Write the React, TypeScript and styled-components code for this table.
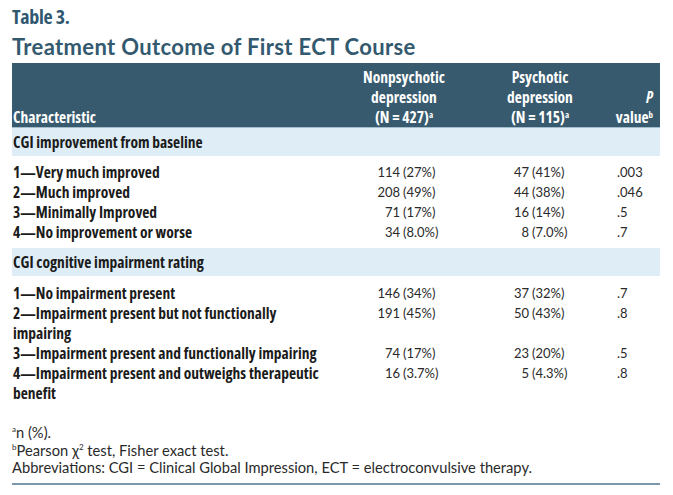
import React from "react";
import styled, { createGlobalStyle } from "styled-components";

const GlobalStyle = createGlobalStyle`
  html, body {
    margin: 0;
    padding: 0;
    background: #ffffff;
  }
`;

const CONDENSED = `"Open Sans", "DejaVu Sans Condensed", sans-serif`;
const BODY = `Lato, "Open Sans", "Liberation Sans", sans-serif`;

type Row = {
  label: string;
  non: [string, string];
  psy: [string, string];
  p: string;
};

type Section = {
  title: string;
  rows: Row[];
};

const SECTIONS: Section[] = [
  {
    title: "CGI improvement from baseline",
    rows: [
      { label: "1—Very much improved", non: ["114", "(27%)"], psy: ["47", "(41%)"], p: ".003" },
      { label: "2—Much improved", non: ["208", "(49%)"], psy: ["44", "(38%)"], p: ".046" },
      { label: "3—Minimally Improved", non: ["71", "(17%)"], psy: ["16", "(14%)"], p: ".5" },
      { label: "4—No improvement or worse", non: ["34", "(8.0%)"], psy: ["8", "(7.0%)"], p: ".7" },
    ],
  },
  {
    title: "CGI cognitive impairment rating",
    rows: [
      { label: "1—No impairment present", non: ["146", "(34%)"], psy: ["37", "(32%)"], p: ".7" },
      { label: "2—Impairment present but not functionally impairing", non: ["191", "(45%)"], psy: ["50", "(43%)"], p: ".8" },
      { label: "3—Impairment present and functionally impairing", non: ["74", "(17%)"], psy: ["23", "(20%)"], p: ".5" },
      { label: "4—Impairment present and outweighs therapeutic benefit", non: ["16", "(3.7%)"], psy: ["5", "(4.3%)"], p: ".8" },
    ],
  },
];

export default function App() {
  return (
    <>
      <GlobalStyle />
      <Page>
        <Caption>Table 3.</Caption>
        <Title>Treatment Outcome of First ECT Course</Title>

        <HeaderRow>
          <HeadCell>Characteristic</HeadCell>
          <HeadCell $align="center">
            Nonpsychotic
            <br />
            depression
            <br />
            (N = 427)<Sup>a</Sup>
          </HeadCell>
          <HeadCell $align="center">
            Psychotic
            <br />
            depression
            <br />
            (N = 115)<Sup>a</Sup>
          </HeadCell>
          <HeadCell $align="right">
            <em>P</em>
            <br />
            value<Sup>b</Sup>
          </HeadCell>
        </HeaderRow>

        {SECTIONS.map((section, i) => (
          <React.Fragment key={section.title}>
            <SectionBand>{section.title}</SectionBand>
            <SectionBody $top={i === 0 ? 6 : 7} $bottom={i === 0 ? 6 : 0}>
              {section.rows.map((row) => (
                <DataRow key={row.label}>
                  <Label>{row.label}</Label>
                  <NumCell>
                    <Count $width={33}>{row.non[0]}</Count>
                    <Pct>{row.non[1]}</Pct>
                  </NumCell>
                  <NumCell>
                    <Count $width={62}>{row.psy[0]}</Count>
                    <Pct>{row.psy[1]}</Pct>
                  </NumCell>
                  <PValue>{row.p}</PValue>
                </DataRow>
              ))}
            </SectionBody>
          </React.Fragment>
        ))}

        <Notes>
          <Note>
            <NoteSup>a</NoteSup>n (%).
          </Note>
          <Note>
            <NoteSup>b</NoteSup>Pearson χ<NoteSup>2</NoteSup> test, Fisher exact test.
          </Note>
          <Note>Abbreviations: CGI = Clinical Global Impression, ECT = electroconvulsive therapy.</Note>
        </Notes>
      </Page>
    </>
  );
}

const Page = styled.div`
  width: 648px;
  padding: 6px 13px 0 12px;
`;

const Caption = styled.div`
  font-family: ${CONDENSED};
  font-stretch: 75%;
  font-weight: 700;
  font-size: 20px;
  line-height: 22px;
  letter-spacing: -0.3px;
  color: #2f5870;
`;

const Title = styled.h1`
  margin: 6px 0 3px;
  font-family: ${BODY};
  font-weight: 700;
  font-size: 22px;
  letter-spacing: 0.35px;
  line-height: 26px;
  color: #33596f;
`;

const HeaderRow = styled.div`
  display: grid;
  grid-template-columns: 328px 128px 144px 48px;
  align-items: end;
  height: 65px;
  box-sizing: border-box;
  padding-bottom: 0;
  background: #385a6e;
  border-bottom: 1px solid #a3bccb;
`;

const HeadCell = styled.div<{ $align?: "left" | "center" | "right" }>`
  font-family: ${CONDENSED};
  font-stretch: 75%;
  font-weight: 700;
  font-size: 15.5px;
  line-height: 20px;
  color: #ffffff;
  text-align: ${(p) => p.$align ?? "left"};
  padding-left: ${(p) => (p.$align ? "0" : "1px")};
  padding-right: ${(p) => (p.$align === "right" ? "7px" : "0")};

  em {
    font-style: italic;
  }
`;

const Sup = styled.sup`
  font-size: 9px;
  line-height: 0;
  vertical-align: 5px;
`;

const SectionBand = styled.div`
  height: 28px;
  display: flex;
  align-items: center;
  padding-left: 1px;
  background: #deedf6;
  font-family: ${CONDENSED};
  font-stretch: 75%;
  font-weight: 700;
  font-size: 15.5px;
  color: #1b1b1b;
`;

const SectionBody = styled.div<{ $top: number; $bottom: number }>`
  padding: ${(p) => p.$top}px 0 ${(p) => p.$bottom}px;
`;

const DataRow = styled.div`
  display: grid;
  grid-template-columns: 355px 100px 150px 43px;
  align-items: start;
  line-height: 20px;
`;

const Label = styled.div`
  padding-left: 1px;
  padding-right: 42px;
  font-family: ${CONDENSED};
  font-stretch: 75%;
  font-weight: 700;
  font-size: 15.5px;
  color: #1b1b1b;
`;

const NumCell = styled.div`
  display: flex;
  font-family: ${BODY};
  font-size: 13px;
  color: #2a2a2a;
  white-space: nowrap;
`;

const Count = styled.span<{ $width: number }>`
  width: ${(p) => p.$width}px;
  text-align: right;
`;

const Pct = styled.span`
  margin-left: 3px;
`;

const PValue = styled.div`
  font-family: ${BODY};
  font-size: 13px;
  color: #2a2a2a;
`;

const Notes = styled.div`
  margin-top: 21px;
  padding-bottom: 6px;
  border-bottom: 2px solid #7d98aa;
  font-family: ${BODY};
  font-size: 14.7px;
  line-height: 17.5px;
  color: #2a2a2a;
`;

const Note = styled.div``;

const NoteSup = styled.sup`
  font-size: 8px;
  line-height: 0;
  vertical-align: 6px;
`;
